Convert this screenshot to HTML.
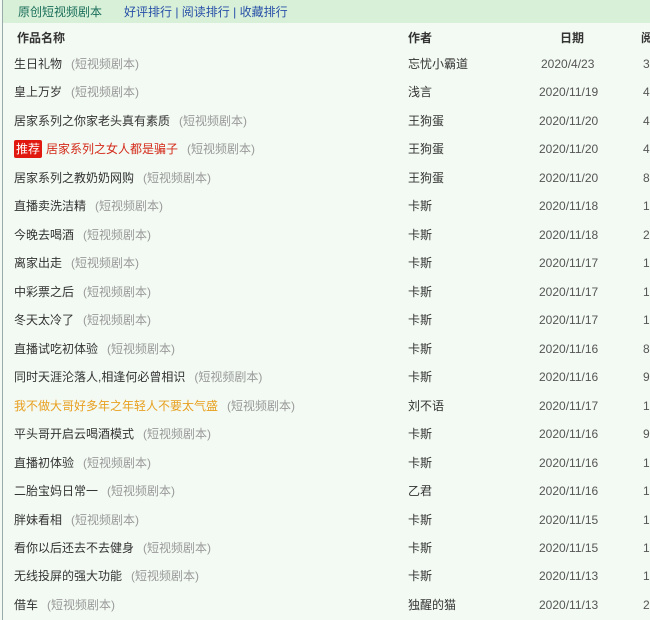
<!DOCTYPE html>
<html><head><meta charset="utf-8"><style>
body{margin:0;width:650px;height:620px;overflow:hidden;background:#f3faf3;font-family:"Liberation Sans","Noto Sans CJK SC",sans-serif;font-size:12px;color:#333;position:relative}
.bar{position:absolute;left:3px;top:0;width:647px;height:23px;background:#d8f0d8}
.lb{position:absolute;left:2px;top:0;width:1px;height:620px;background:#9aa}
.t{position:absolute;white-space:nowrap;line-height:16px}
.g{color:#999;margin-left:9px}
.h{font-weight:bold;color:#333}
.tag{display:inline-block;background:#e0180f;color:#fff;padding:1px 2px;line-height:16px;border-radius:2px;margin-right:4px}
</style></head><body>
<div class="bar"></div><div class="lb"></div>
<div class="t" style="left:18px;top:4px;color:#1a6e5a">原创短视频剧本</div>
<div class="t" style="left:124px;top:4px;color:#2850a8">好评排行 | 阅读排行 | 收藏排行</div>
<div class="t h" style="left:17px;top:30px">作品名称</div>
<div class="t h" style="left:408px;top:30px">作者</div>
<div class="t h" style="left:560px;top:30px">日期</div>
<div class="t h" style="left:641px;top:30px">阅</div>
<div id="rows"></div>
<script>
var d=[["生日礼物","忘忧小霸道","2020/4/23","3"],["皇上万岁","浅言","2020/11/19","4"],["居家系列之你家老头真有素质","王狗蛋","2020/11/20","4"],["居家系列之女人都是骗子","王狗蛋","2020/11/20","4",1],["居家系列之教奶奶网购","王狗蛋","2020/11/20","8"],["直播卖洗洁精","卡斯","2020/11/18","1"],["今晚去喝酒","卡斯","2020/11/18","2"],["离家出走","卡斯","2020/11/17","1"],["中彩票之后","卡斯","2020/11/17","1"],["冬天太冷了","卡斯","2020/11/17","1"],["直播试吃初体验","卡斯","2020/11/16","8"],["同时天涯沦落人,相逢何必曾相识","卡斯","2020/11/16","9"],["我不做大哥好多年之年轻人不要太气盛","刘不语","2020/11/17","1",2],["平头哥开启云喝酒模式","卡斯","2020/11/16","9"],["直播初体验","卡斯","2020/11/16","1"],["二胎宝妈日常一","乙君","2020/11/16","1"],["胖妹看相","卡斯","2020/11/15","1"],["看你以后还去不去健身","卡斯","2020/11/15","1"],["无线投屏的强大功能","卡斯","2020/11/13","1"],["借车","独醒的猫","2020/11/13","2"]];
var h="";d.forEach(function(r,i){var y=56+i*28.47;var t=r[0];
if(r[4]==1)t='<span class="tag">推荐</span><span style="color:#d42a1a">'+t+'</span>';
if(r[4]==2)t='<span style="color:#e8a020">'+t+'</span>';
h+='<div class="t" style="left:14px;top:'+(r[4]==1?y-1:y)+'px">'+t+'<span class="g">(短视频剧本)</span></div>';
h+='<div class="t" style="left:408px;top:'+y+'px">'+r[1]+'</div>';
h+='<div class="t" style="left:'+(r[2].length==9?541:539)+'px;top:'+y+'px;color:#555">'+r[2]+'</div>';
h+='<div class="t" style="left:643px;top:'+y+'px;color:#555">'+r[3]+'</div>';});
document.getElementById("rows").innerHTML=h;
</script>
</body></html>
